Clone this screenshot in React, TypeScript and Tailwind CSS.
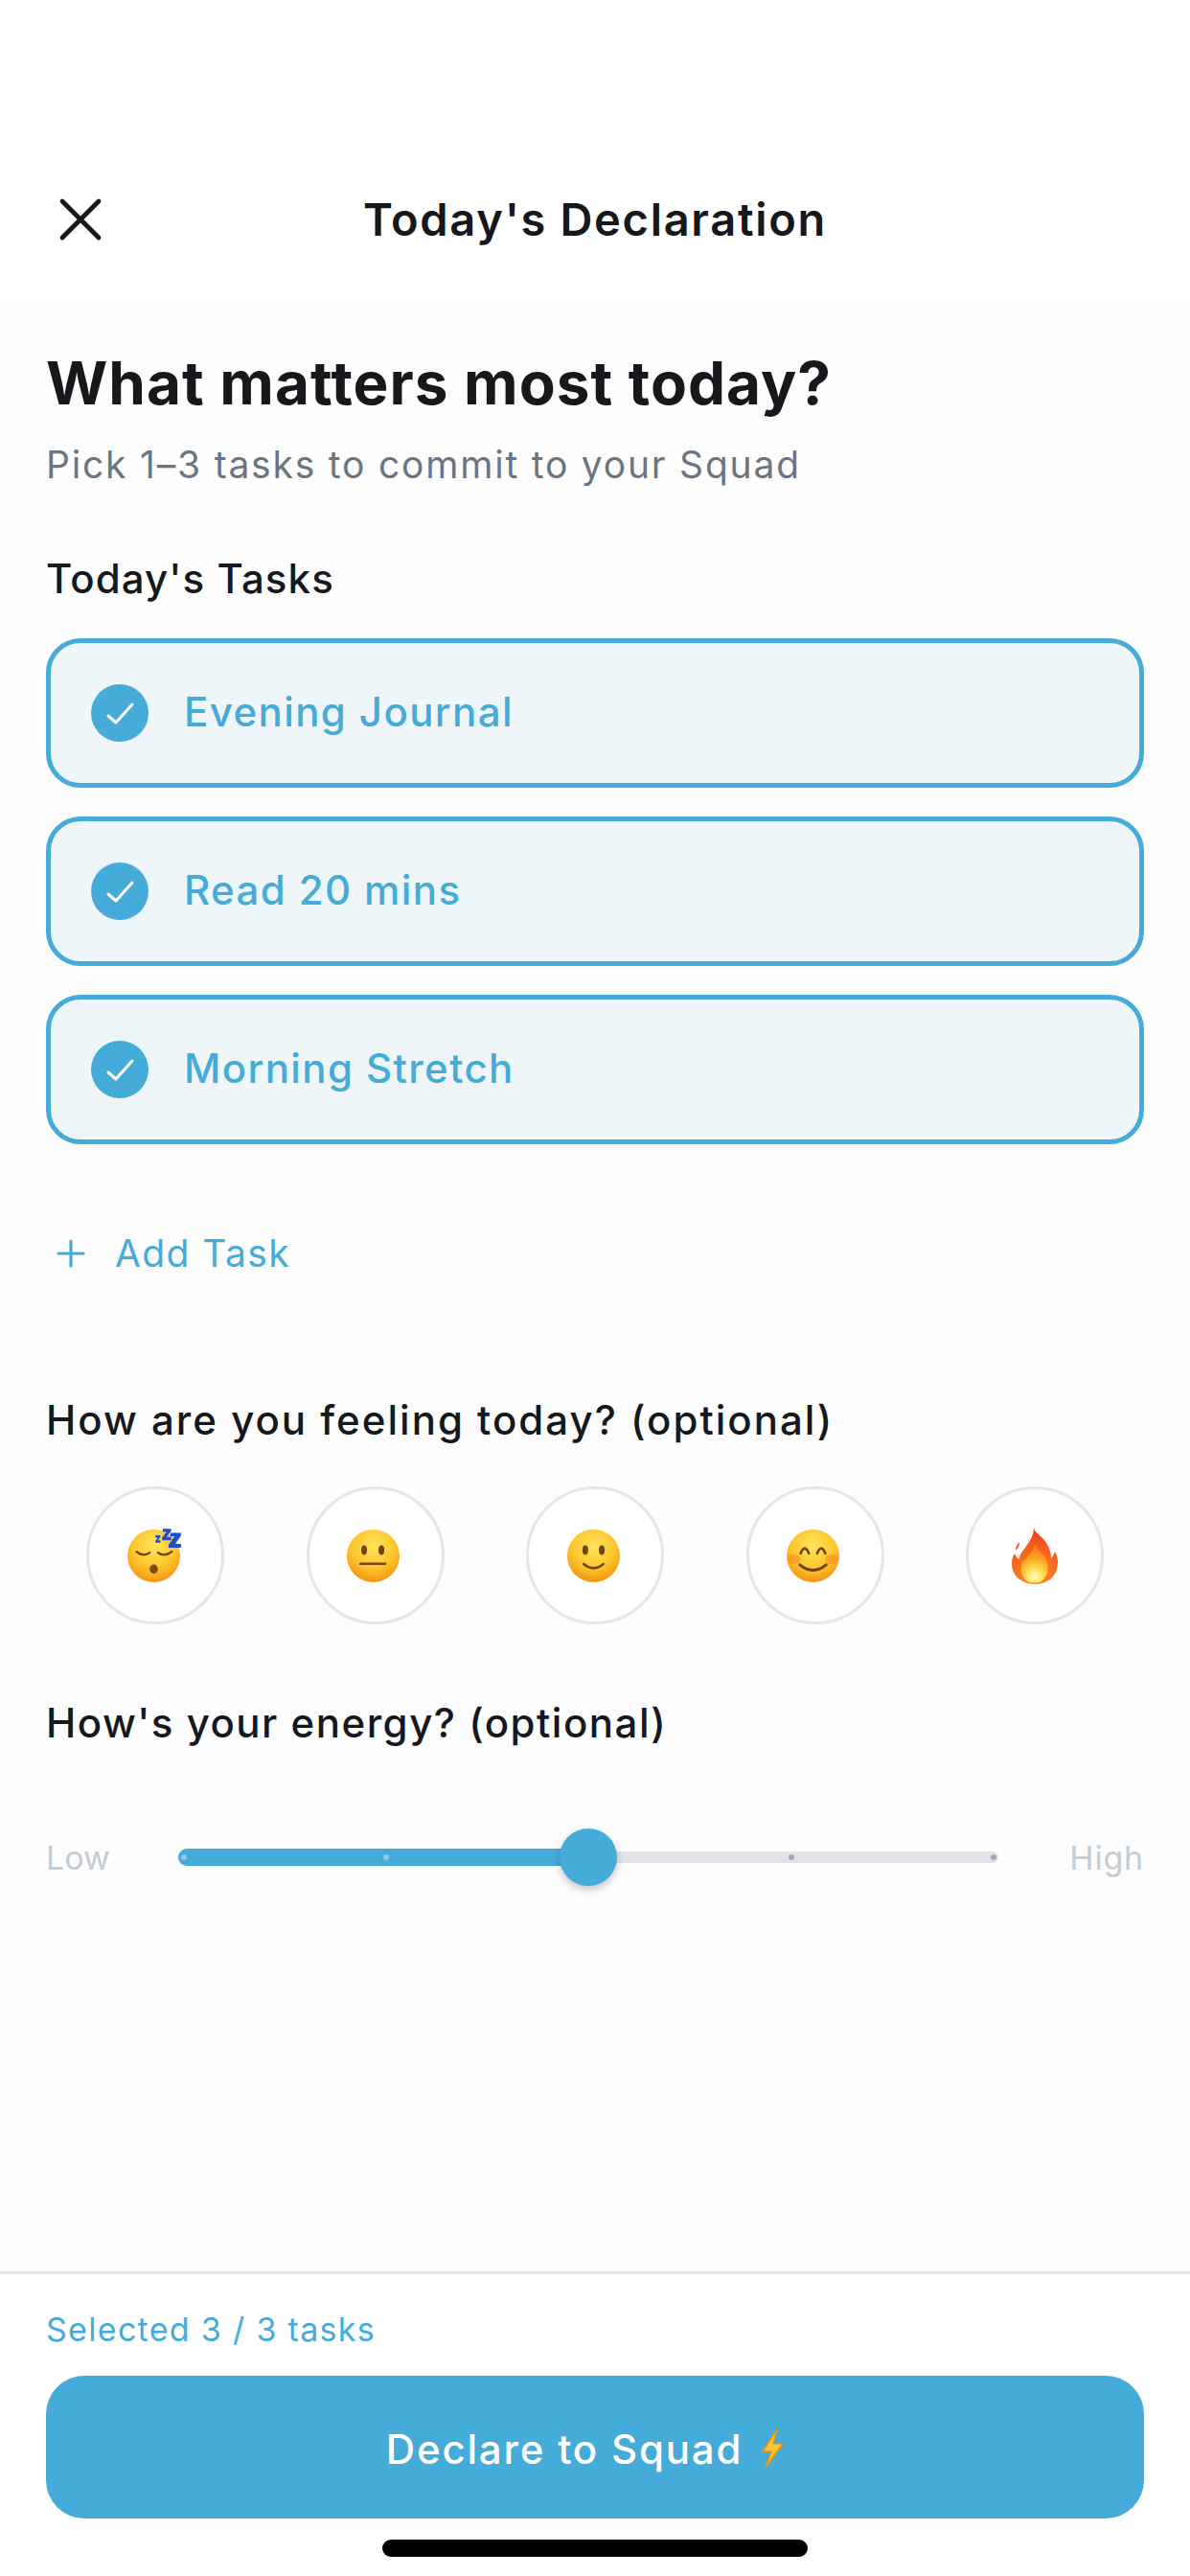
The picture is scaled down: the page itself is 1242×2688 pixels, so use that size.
import React from "react";

const Face = ({ children }: { children: React.ReactNode }) => (
  <svg viewBox="0 0 64 64" className="w-[55px] h-[55px] mr-[4px] overflow-visible">
    <defs>
      <radialGradient id="fg" cx="50%" cy="32%" r="72%">
        <stop offset="0%" stopColor="#ffe55c" />
        <stop offset="55%" stopColor="#fdc62e" />
        <stop offset="100%" stopColor="#f2900f" />
      </radialGradient>
    </defs>
    <circle cx="32" cy="32" r="32" fill="url(#fg)" />
    {children}
  </svg>
);

const Sleep = () => (
  <Face>
    <path d="M11 27q8 7 16 1M37 28q8 6 17 -1" fill="none" stroke="#6e4208" strokeWidth="2.6" strokeLinecap="round" />
    <ellipse cx="32" cy="48" rx="5" ry="5.5" fill="#7a4a10" />
    <path d="M52 4h13v3.500l-7 10h7V22H50v-3.500l7-10h-5z" fill="#1c4fc9" />
    <path d="M43-1h10v3l-5.500 7H53v4H42v-3l5.500-7H43z" fill="#1c4fc9" />
    <path d="M34 7h6v2l-3 4h3v3h-6v-2l3-4h-3z" fill="#1c4fc9" />
  </Face>
);
const Neutral = () => (
  <Face>
    <ellipse cx="21" cy="25" rx="3.500" ry="5.800" fill="#70450c" />
    <ellipse cx="42" cy="25" rx="3.500" ry="5.800" fill="#70450c" />
    <rect x="15" y="40" width="33" height="3" rx="1.500" fill="#70450c" />
  </Face>
);
const Smile = () => (
  <Face>
    <ellipse cx="22" cy="25" rx="3.500" ry="5.800" fill="#70450c" />
    <ellipse cx="42" cy="25" rx="3.500" ry="5.800" fill="#70450c" />
    <path d="M20 42q12 10 24 0" fill="none" stroke="#70450c" strokeWidth="3" strokeLinecap="round" />
  </Face>
);
const Happy = () => (
  <Face>
    <ellipse cx="9" cy="36" rx="8" ry="6" fill="#f5702a" opacity="0.4" />
    <ellipse cx="55" cy="36" rx="8" ry="6" fill="#f5702a" opacity="0.4" />
    <path d="M17 29q5-12 10 0M37 29q5-12 10 0" fill="none" stroke="#6e4208" strokeWidth="3" strokeLinecap="round" />
    <path d="M16 43q16 13 32 0" fill="none" stroke="#6e4208" strokeWidth="3.500" strokeLinecap="round" />
  </Face>
);
const Fire = () => (
  <svg viewBox="0 0 48 59" className="w-[48px] h-[59px]">
    <defs>
      <radialGradient id="fl" gradientUnits="userSpaceOnUse" cx="24" cy="50" r="52">
        <stop offset="0%" stopColor="#ff9a2a" />
        <stop offset="50%" stopColor="#f7641e" />
        <stop offset="100%" stopColor="#ee3a1c" />
      </radialGradient>
      <radialGradient id="fi" gradientUnits="userSpaceOnUse" cx="24" cy="51" r="30">
        <stop offset="0%" stopColor="#fffbd0" />
        <stop offset="25%" stopColor="#ffe45a" />
        <stop offset="65%" stopColor="#fca21f" />
        <stop offset="100%" stopColor="#f9791c" />
      </radialGradient>
    </defs>
    <path d="M23 0C24 6 31 8 36 16 40 22 41 27 41 32 43 30 44 28 45 25 47 28 48 32 48 36 48 43 46 49 40 54 36 57 30 59 24 59 18 59 12 57 8 54 3 50 0 44 0 37 0 33 1 30 3 27 4 30 6 32 8 33 8 28 11 25 14 21 18 15 23 9 23 0Z" fill="url(#fl)" />
    <path d="M4 23C4 20 6 17 8 15 8 18 7 21 5 23Z" fill="#f4541e" />
    <path d="M24 18C26 24 34 27 37 36 39 43 37 51 31 56 28 58 20 58 16 56 10 51 8 43 11 37 14 31 22 27 24 18Z" fill="url(#fi)" />
  </svg>
);
const Bolt = () => (
  <svg viewBox="0 0 30 42" className="w-[30px] h-[42px]">
    <path d="M20 1 5 24h9L8 41 26 16h-10z" fill="#fdc52f" stroke="#e8930c" strokeWidth="1.400" strokeLinejoin="round" />
  </svg>
);

const tasks = ["Evening Journal", "Read 20 mins", "Morning Stretch"];
const moods = [Sleep, Neutral, Smile, Happy, Fire];

export default function App() {
  return (
    <div className="w-[1242px] h-[2688px] flex flex-col bg-white text-[#16181c] font-['Inter',sans-serif] overflow-hidden">
      <header className="h-[310px] shrink-0 pt-[190px] px-[48px] relative flex justify-center">
        <svg viewBox="0 0 48 48" className="absolute left-[60px] top-[205px] w-[48px] h-[48px]" fill="none" stroke="#16181c" strokeWidth="4.800" strokeLinecap="round">
          <path d="M5 5 43 43M43 5 5 43" />
        </svg>
        <h1 className="text-[47px] leading-[78px] font-semibold tracking-[1.7px]">Today's Declaration</h1>
      </header>

      <main className="flex-1 bg-[#fdfdfe] px-[48px] pt-[46px]">
        <h2 className="text-[62px] leading-[88px] font-bold tracking-[1px]">What matters most today?</h2>
        <p className="mt-[13px] text-[39px] leading-[56px] text-[#6b7580] tracking-[1.8px]">Pick 1–3 tasks to commit to your Squad</p>
        <h3 className="mt-[63px] text-[42px] leading-[56px] font-medium tracking-[1.1px]">Today's Tasks</h3>

        <div className="mt-[34px] flex flex-col gap-[30px]">
          {tasks.map((t) => (
            <div key={t} className="h-[156px] rounded-[36px] border-[5px] border-[#45abd8] bg-[#eff6fa] flex items-center pl-[42px] gap-[37px]">
              <div className="w-[60px] h-[60px] rounded-full bg-[#45abd8]">
                <svg viewBox="0 0 60 60" className="w-[60px] h-[60px]" fill="none" stroke="#fff" strokeWidth="3" strokeLinecap="round" strokeLinejoin="round">
                  <path d="M18 33l8 7L43 21" />
                </svg>
              </div>
              <span className="pb-[3px] text-[42px] font-medium text-[#45abd8] tracking-[1.4px]">{t}</span>
            </div>
          ))}
        </div>

        <div className="mt-[86px] h-[56px] flex items-center gap-[30px] pl-[10px] text-[#45abd8]">
          <svg viewBox="0 0 32 32" className="w-[32px] h-[32px]" fill="none" stroke="#45abd8" strokeWidth="3.200" strokeLinecap="round">
            <path d="M16 3v26M3 16h26" />
          </svg>
          <span className="text-[39px] tracking-[1.4px]">Add Task</span>
        </div>

        <h3 className="mt-[118px] text-[42px] leading-[56px] font-medium tracking-[2px]">How are you feeling today? (optional)</h3>

        <div className="mt-[41px] flex justify-between px-[42px]">
          {moods.map((M, i) => (
            <div key={i} className="w-[144px] h-[144px] rounded-full border-[3px] border-[#e3e6ea] bg-white flex items-center justify-center">
              <M />
            </div>
          ))}
        </div>

        <h3 className="mt-[75px] text-[42px] leading-[56px] font-medium tracking-[1.5px]">How's your energy? (optional)</h3>

        <div className="mt-[82px] flex items-center h-[60px]">
          <span className="w-[138px] shrink-0 text-[34px] text-[#c5ccd3]">Low</span>
          <div className="relative w-[856px] h-[12px] rounded-full bg-[#e0e3e7]">
            <div className="absolute left-0 top-[-3px] w-[428px] h-[18px] rounded-full bg-[#45abd8]" />
            <div className="absolute left-[3px] top-[3px] w-[6px] h-[6px] rounded-full bg-[#8cc9e6]" />
            <div className="absolute left-[214px] top-[3px] w-[6px] h-[6px] rounded-full bg-[#8cc9e6]" />
            <div className="absolute left-[637px] top-[3px] w-[6px] h-[6px] rounded-full bg-[#a3a9af]" />
            <div className="absolute left-[848px] top-[3px] w-[6px] h-[6px] rounded-full bg-[#a3a9af]" />
            <div className="absolute left-[398px] top-[-24px] w-[60px] h-[60px] rounded-full bg-[#45abd8] shadow-[0_4px_8px_rgba(0,0,0,0.22)]" />
          </div>
          <span className="ml-auto text-[34px] text-[#c5ccd3] tracking-[0.8px]">High</span>
        </div>
      </main>

      <footer className="h-[318px] shrink-0 border-t-[3px] border-[#e3e6ea] bg-white px-[48px] pt-[36px] relative">
        <p className="text-[34px] leading-[44px] text-[#45abd8] tracking-[1.3px]">Selected 3 / 3 tasks</p>
        <button className="mt-[26px] w-full h-[149px] rounded-[40px] bg-[#45abd8] text-white text-[42px] font-medium tracking-[1.8px] flex items-center justify-center gap-[16px] pr-[18px] pt-[3px]">
          Declare to Squad <Bolt />
        </button>
        <div className="absolute left-[399px] top-[277px] w-[444px] h-[18px] rounded-full bg-black" />
      </footer>
    </div>
  );
}
